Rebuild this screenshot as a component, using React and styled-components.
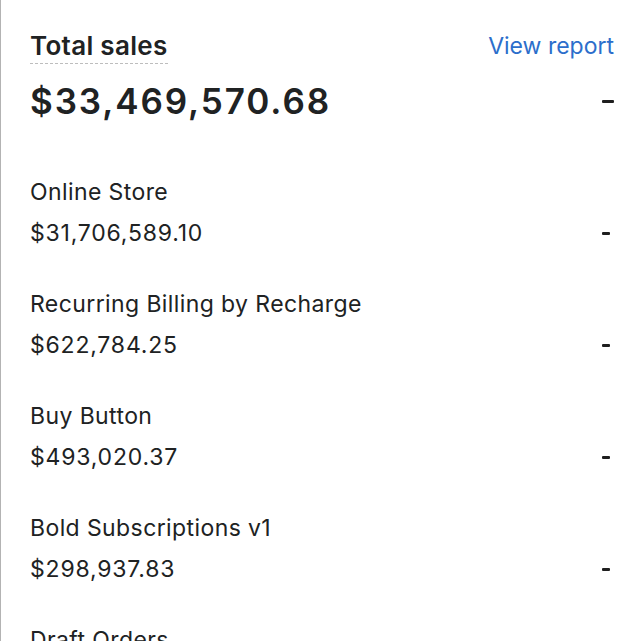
import React from "react";
import styled, { createGlobalStyle } from "styled-components";

const GlobalStyle = createGlobalStyle`
  html, body {
    margin: 0;
    padding: 0;
    background: #ffffff;
  }
  body {
    font-family: Inter, "Noto Sans", "Liberation Sans", sans-serif;
    color: #202223;
    -webkit-font-smoothing: antialiased;
  }
`;

const channels = [
  { name: "Online Store", amount: "$31,706,589.10" },
  { name: "Recurring Billing by Recharge", amount: "$622,784.25" },
  { name: "Buy Button", amount: "$493,020.37" },
  { name: "Bold Subscriptions v1", amount: "$298,937.83" },
  { name: "Draft Orders", amount: "$187,412.96" },
];

const App = () => {
  return (
    <>
      <GlobalStyle />
      <Pagina>
        <Cabecera>
          <Titulo>Total sales</Titulo>
          <Enlace href="#">View report</Enlace>
        </Cabecera>
        <FilaTotal>
          <Total>$33,469,570.68</Total>
          <Guion $ancho={12} />
        </FilaTotal>
        <Lista>
          {channels.map((c) => (
            <Canal key={c.name}>
              <Nombre>{c.name}</Nombre>
              <FilaMonto>
                <Monto>{c.amount}</Monto>
                <Guion $ancho={8} />
              </FilaMonto>
            </Canal>
          ))}
        </Lista>
      </Pagina>
    </>
  );
};

export default App;

const Pagina = styled.div`
  box-sizing: border-box;
  height: 641px;
  overflow: hidden;
  border-left: 1px solid #b3b3b3;
  padding: 30px 26px 0 29px;
`;

const Cabecera = styled.div`
  display: flex;
  justify-content: space-between;
  align-items: flex-start;
`;

const Titulo = styled.h2`
  margin: 0;
  font-size: 26px;
  line-height: 32px;
  font-weight: 600;
  letter-spacing: 0.3px;
  color: #202223;
  padding-bottom: 2px;
  background-image: linear-gradient(to right, #bdbdbd 60%, transparent 0);
  background-size: 5px 1px;
  background-repeat: repeat-x;
  background-position: left bottom;
`;

const Enlace = styled.a`
  font-size: 23px;
  line-height: 32px;
  font-weight: 400;
  color: #2c6ecb;
  text-decoration: none;
`;

const FilaTotal = styled.div`
  display: flex;
  justify-content: space-between;
  align-items: center;
  margin-top: 17px;
`;

const Total = styled.div`
  font-size: 35px;
  line-height: 40px;
  font-weight: 600;
  letter-spacing: 1.9px;
  color: #202223;
`;

const Guion = styled.span`
  display: block;
  width: ${(p) => p.$ancho}px;
  height: 3px;
  border-radius: 1px;
  background: #1f1f1f;
`;

const Lista = styled.div`
  display: flex;
  flex-direction: column;
  gap: 43px;
  margin-top: 57px;
`;

const Canal = styled.div`
  display: flex;
  flex-direction: column;
  gap: 13px;
`;

const Nombre = styled.div`
  font-size: 23px;
  line-height: 28px;
  font-weight: 400;
  letter-spacing: 0.4px;
  color: #202223;
`;

const FilaMonto = styled.div`
  display: flex;
  justify-content: space-between;
  align-items: center;
  padding-right: 4px;
`;

const Monto = styled.div`
  font-size: 23px;
  line-height: 28px;
  font-weight: 400;
  letter-spacing: 0.8px;
  color: #202223;
`;
